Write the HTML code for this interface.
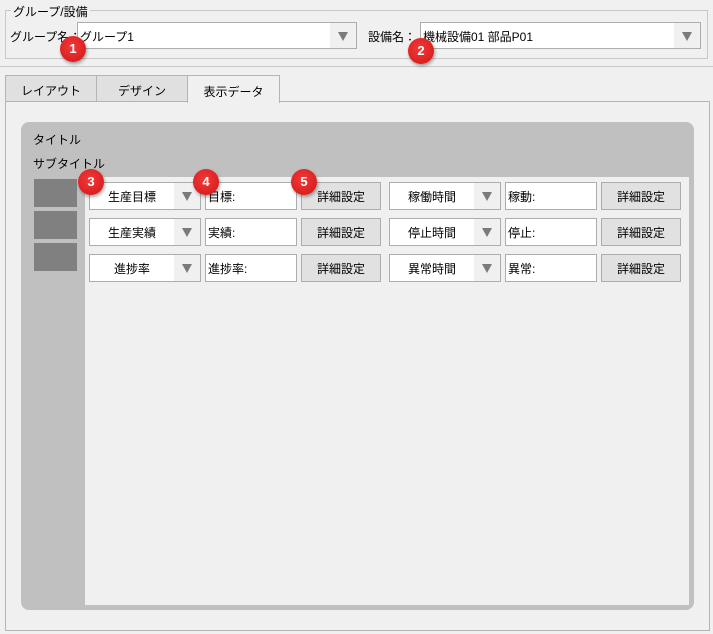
<!DOCTYPE html>
<html><head><meta charset="utf-8"><style>
*{box-sizing:border-box;margin:0;padding:0}
body{width:713px;height:634px;background:#f0f0f0;position:relative;overflow:hidden;font-family:"Liberation Sans","Noto Sans CJK JP",sans-serif;font-size:12px;color:#000}
.a{position:absolute}
.combo{position:absolute;background:#fff;border:1px solid #adadad;height:28px}
.combo .t{position:absolute;left:2px;top:5px;white-space:nowrap}
.combo .dd{position:absolute;right:0;top:0;bottom:0;width:26px;background:#f0f0f0}
.tri{position:absolute;width:0;height:0;border-left:5px solid transparent;border-right:5px solid transparent;border-top:9px solid #7a7a7a;left:8px;top:9px}
.txt{position:absolute;background:#fff;border:1px solid #adadad;height:28px;padding:5px 0 0 2px;white-space:nowrap}
.btn{position:absolute;background:#e1e1e1;border:1px solid #adadad;height:28px;text-align:center;padding-top:5px}
.badge{position:absolute;width:26px;height:26px;border-radius:50%;background:radial-gradient(circle at 45% 40%,#f03a3a,#d41414);color:#fff;font-size:13px;font-weight:bold;text-align:center;line-height:26px;box-shadow:1px 2px 3px rgba(0,0,0,.35)}
.sq{position:absolute;left:34px;width:43px;height:28px;background:#808080}
</style></head><body>
<div class="a" style="left:5px;top:10px;width:703px;height:49px;border:1px solid #c8c8c8"></div>
<div class="a" style="left:11px;top:3px;background:#f0f0f0;padding:0 2px">グループ/設備</div>
<div class="a" style="left:10px;top:28px">グループ名：</div>
<div class="combo" style="left:77px;top:22px;width:280px;height:27px"><span class="t" style="top:5px">グループ1</span><div class="dd"><div class="tri" style="top:9px"></div></div></div>
<div class="a" style="left:368px;top:28px">設備名：</div>
<div class="combo" style="left:420px;top:22px;width:281px;height:27px"><span class="t" style="top:5px">機械設備01 部品P01</span><div class="dd"><div class="tri" style="top:9px"></div></div></div>
<div class="a" style="left:0;top:66px;width:713px;height:1px;background:#c8c8c8"></div>
<div class="a" style="left:5px;top:101px;width:705px;height:530px;border:1px solid #b4b4b4;background:#f0f0f0"></div>
<div class="a" style="left:5px;top:75px;width:92px;height:27px;border:1px solid #b4b4b4;background:#e0e0e0;text-align:center;padding-top:6px">レイアウト</div>
<div class="a" style="left:96px;top:75px;width:92px;height:27px;border:1px solid #b4b4b4;background:#e0e0e0;text-align:center;padding-top:6px">デザイン</div>
<div class="a" style="left:187px;top:75px;width:93px;height:28px;border:1px solid #b4b4b4;border-bottom:none;background:#f0f0f0;text-align:center;padding-top:7px">表示データ</div>
<div class="a" style="left:21px;top:122px;width:673px;height:488px;background:#c0c0c0;border-radius:8px"></div>
<div class="a" style="left:85px;top:177px;width:604px;height:428px;background:#f0f0f0"></div>
<div class="a" style="left:33px;top:131px">タイトル</div>
<div class="a" style="left:33px;top:155px">サブタイトル</div>
<div class="sq" style="top:179px"></div><div class="sq" style="top:211px"></div><div class="sq" style="top:243px"></div>
<div class="combo" style="left:89px;top:182px;width:112px"><span class="t" style="left:18px">生産目標</span><div class="dd"><div class="tri"></div></div></div>
<div class="txt" style="left:205px;top:182px;width:92px">目標:</div>
<div class="btn" style="left:301px;top:182px;width:80px">詳細設定</div>
<div class="combo" style="left:389px;top:182px;width:112px"><span class="t" style="left:18px">稼働時間</span><div class="dd"><div class="tri"></div></div></div>
<div class="txt" style="left:505px;top:182px;width:92px">稼動:</div>
<div class="btn" style="left:601px;top:182px;width:80px">詳細設定</div>
<div class="combo" style="left:89px;top:218px;width:112px"><span class="t" style="left:18px">生産実績</span><div class="dd"><div class="tri"></div></div></div>
<div class="txt" style="left:205px;top:218px;width:92px">実績:</div>
<div class="btn" style="left:301px;top:218px;width:80px">詳細設定</div>
<div class="combo" style="left:389px;top:218px;width:112px"><span class="t" style="left:18px">停止時間</span><div class="dd"><div class="tri"></div></div></div>
<div class="txt" style="left:505px;top:218px;width:92px">停止:</div>
<div class="btn" style="left:601px;top:218px;width:80px">詳細設定</div>
<div class="combo" style="left:89px;top:254px;width:112px"><span class="t" style="left:24px">進捗率</span><div class="dd"><div class="tri"></div></div></div>
<div class="txt" style="left:205px;top:254px;width:92px">進捗率:</div>
<div class="btn" style="left:301px;top:254px;width:80px">詳細設定</div>
<div class="combo" style="left:389px;top:254px;width:112px"><span class="t" style="left:18px">異常時間</span><div class="dd"><div class="tri"></div></div></div>
<div class="txt" style="left:505px;top:254px;width:92px">異常:</div>
<div class="btn" style="left:601px;top:254px;width:80px">詳細設定</div>
<div class="badge" style="left:60px;top:36px">1</div>
<div class="badge" style="left:408px;top:38px">2</div>
<div class="badge" style="left:78px;top:169px">3</div>
<div class="badge" style="left:193px;top:169px">4</div>
<div class="badge" style="left:291px;top:169px">5</div>
</body></html>
